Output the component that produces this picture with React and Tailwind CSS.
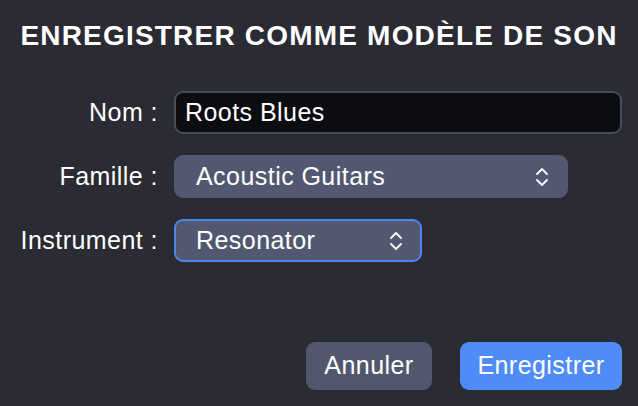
function Chevrons() {
  return (
    <svg width="16" height="24" viewBox="0 0 16 24" fill="none" stroke="currentColor" strokeWidth="1.8" strokeLinecap="round" strokeLinejoin="round">
      <path d="M3 9 L8 4 L13 9" />
      <path d="M3 15 L8 20 L13 15" />
    </svg>
  );
}

export default function App() {
  return (
    <div
      className="w-[638px] h-[406px] bg-[#2a2b33] text-white flex flex-col overflow-hidden"
      style={{ fontFamily: '"Liberation Sans", Arial, sans-serif' }}
    >
      {/* Title */}
      <h1 className="text-center font-bold text-[28px] leading-none tracking-[1.2px] pt-[22px]">
        ENREGISTRER COMME MODÈLE DE SON
      </h1>

      {/* Form */}
      <div className="grid grid-cols-[158px_1fr] gap-x-[16px] gap-y-[21px] items-center mt-[41px] pr-[16px] text-[25px] tracking-[0.45px]">
        <label className="text-right">Nom :</label>
        <div className="h-[43px] rounded-[9px] bg-[#0c0d10] border-2 border-[#4a4b5c] flex items-center px-[9px]">
          Roots Blues
        </div>

        <label className="text-right">Famille :</label>
        <div className="w-[394px] h-[43px] rounded-[9px] bg-[#525870] flex items-center justify-between pl-[22px] pr-[18px]">
          <span>Acoustic Guitars</span>
          <Chevrons />
        </div>

        <label className="text-right">Instrument :</label>
        <div className="w-[248px] h-[43px] rounded-[9px] bg-[#525870] border-2 border-[#4a86ec] flex items-center justify-between pl-[20px] pr-[16px]">
          <span>Resonator</span>
          <Chevrons />
        </div>
      </div>

      {/* Buttons */}
      <div className="mt-auto flex justify-end gap-[28px] pr-[16px] pb-[16px] text-[25px] tracking-[0.45px]">
        <button className="w-[126px] h-[48px] rounded-[9px] bg-[#52576e] text-white">Annuler</button>
        <button className="w-[162px] h-[48px] rounded-[9px] bg-[#4f8cf7] text-white">Enregistrer</button>
      </div>
    </div>
  );
}
